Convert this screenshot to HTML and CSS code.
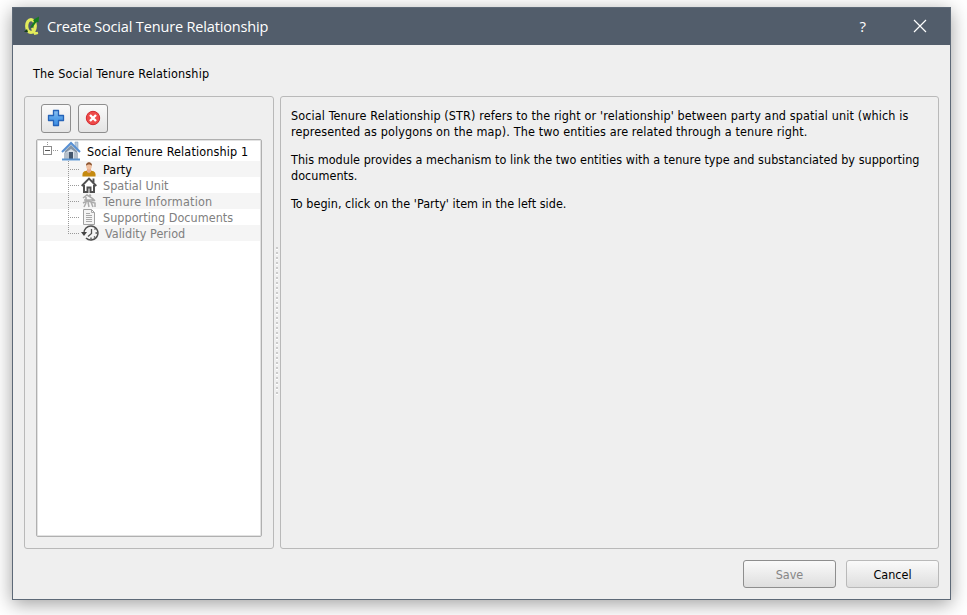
FILE: index.html
```html
<!DOCTYPE html>
<html lang="en">
<head>
<meta charset="utf-8">
<title>Create Social Tenure Relationship</title>
<link rel="stylesheet" href="styles.css">
</head>
<body>
<main class="window">
  <header class="titlebar">
    <svg class="logo" width="16" height="20" viewBox="0 0 16 20">
      <ellipse cx="7" cy="10" rx="4.300" ry="6.400" fill="none" stroke="#e3ec5b" stroke-width="3.200"/>
      <path d="M8 12l3 5.500 3-.7" fill="none" stroke="#e3ec5b" stroke-width="2.400"/>
      <path d="M0 16l3-3 1 3z" fill="#173f19"/>
      <path d="M6 11.500l4-6-1-1.500 6-3.500-.5 6-1.800-.8-4.200 5.500z" fill="#157a1f"/>
    </svg>
    <h1 class="title">Create Social Tenure Relationship</h1>
    <span class="help">?</span>
    <svg class="close" width="14" height="14" viewBox="0 0 14 14"><path d="M1 1l12 12M13 1L1 13" stroke="#fff" stroke-width="1.200"/></svg>
  </header>
  <p class="heading">The Social Tenure Relationship</p>
  <div class="panes">
    <section class="panel side">
      <div class="tools">
        <button class="tool" aria-label="Add">
          <svg width="18" height="18" viewBox="0 0 18 18"><defs><linearGradient id="plus" x2="0" y2="1"><stop stop-color="#8fc3f2"/><stop offset=".5" stop-color="#55a0e8"/><stop offset="1" stop-color="#3f8fe4"/></linearGradient></defs><path d="M6.500 1.500h5v5h5v5h-5v5h-5v-5h-5v-5h5z" fill="url(#plus)" stroke="#2563b8" stroke-width="1.300" stroke-linejoin="round"/></svg>
        </button>
        <button class="tool" aria-label="Remove">
          <svg width="18" height="18" viewBox="0 0 18 18"><circle cx="9" cy="9" r="6.700" fill="#ee4a49" stroke="#d22a30"/><path d="M6 6l6 6M12 6l-6 6" stroke="#fff" stroke-width="2.400"/></svg>
        </button>
      </div>
      <div class="tree">
        <div class="row root">
          <svg class="branch" width="23" height="20" viewBox="0 0 23 20"><path d="M9.500 1v5M15 9.500h5" stroke="#999" stroke-dasharray="1 1"/><rect x="5.500" y="5.500" width="8" height="8" fill="#fff" stroke="#8c8c8c"/><path d="M7 9.500h5" stroke="#555"/></svg>
          <svg class="icon-root" width="20" height="20" viewBox="0 0 20 20"><path d="M14 1h3v8h-3z" fill="#b9cadb" stroke="#8297b0" stroke-width=".5"/><path d="M3 9l7-6 7 6v10H3z" fill="#dbe2e9"/><path d="M3 12v7h5v-8zM13 11v8h4v-7z" fill="#b4bfcb"/><path d="M8 11h4v8H8z" fill="#44576e"/><path d="M10 4l-6 6v2l6-4 6 4v-2z" fill="#8796a6"/><path d="M1 11l9-9 9 9" fill="none" stroke="#578fd3" stroke-width="2"/><path d="M1 18.500h18" stroke="#5c94cf" stroke-width="2"/></svg>
          <span class="label">Social Tenure Relationship 1</span>
        </div>
        <div class="row alt party">
          <svg class="branch" width="16" height="16" viewBox="0 0 16 16"><path d="M2.500 0v16M4 8.500h9" stroke="#999" stroke-dasharray="1 1"/></svg>
          <svg class="icon" width="16" height="16" viewBox="0 0 16 16"><path d="M1.500 15.500c-.5-4 1-6 6.500-6s7 2 6.500 6z" fill="#c58a10"/><path d="M6 7h4v4l-2 1-2-1z" fill="#e5a989"/><ellipse cx="8" cy="5" rx="2.800" ry="3.600" fill="#f0c09f"/><path d="M5 5C4.500 0 11.500 0 11 5 10 3 6 3 5 5z" fill="#8c5632"/></svg>
          <span class="label">Party</span>
        </div>
        <div class="row off spatial">
          <svg class="branch" width="16" height="16" viewBox="0 0 16 16"><path d="M2.500 0v16M4 8.500h9" stroke="#999" stroke-dasharray="1 1"/></svg>
          <svg class="icon" width="16" height="16" viewBox="0 0 16 16"><path d="M.7 9L8 1.500 15.300 9M12.500 1.500v4" fill="none" stroke="#505050" stroke-width="1.900"/><path d="M3 8v7h3.500v-4.500h3V15H13V8" fill="none" stroke="#505050" stroke-width="2"/></svg>
          <span class="label">Spatial Unit</span>
        </div>
        <div class="row off alt tenure">
          <svg class="branch" width="16" height="16" viewBox="0 0 16 16"><path d="M2.500 0v16M4 8.500h9" stroke="#999" stroke-dasharray="1 1"/></svg>
          <svg class="icon" width="16" height="16" viewBox="0 0 16 16"><path d="M2 5l4-3 5 3 3 3M3 7h8M5 4v6M2 10l4-2 5 1M3 14l2-4M8 14l-1-5M12 14l-2-5 4 1v4" fill="none" stroke="#aaa" stroke-width="1.500"/><circle cx="9" cy="2.500" r="1.200" fill="#aaa"/><circle cx="12" cy="7" r="1.500" fill="#aaa"/></svg>
          <span class="label">Tenure Information</span>
        </div>
        <div class="row off docs">
          <svg class="branch" width="16" height="16" viewBox="0 0 16 16"><path d="M2.500 0v16M4 8.500h9" stroke="#999" stroke-dasharray="1 1"/></svg>
          <svg class="icon" width="16" height="16" viewBox="0 0 16 16"><path d="M2.500.5h8l3 3v12h-11z" fill="#f4f4f4" stroke="#a0a0a0"/><path d="M10.500.5v3h3M5 4.500h4M5 6.500h6M5 8.500h6M5 10.500h6M5 12.500h6" fill="none" stroke="#a8a8a8"/></svg>
          <span class="label">Supporting Documents</span>
        </div>
        <div class="row off alt validity">
          <svg class="branch" width="16" height="16" viewBox="0 0 16 16"><path d="M2.500 0v9M4 8.500h9" stroke="#999" stroke-dasharray="1 1"/></svg>
          <svg class="icon" width="18" height="16" viewBox="0 0 18 16"><path d="M3 8C3 4 6 1 10 1a7 7 0 1 1-5 12" fill="none" stroke="#505050" stroke-width="1.500"/><path d="M0 7h6L3 11z" fill="#444"/><path d="M10.500 4v4.500L7 11.500M14.500 8h1.500M10 12.500V14M13.500 4.500l1-1M13 11.500l1 1" fill="none" stroke="#505050" stroke-width="1.300"/></svg>
          <span class="label">Validity Period</span>
        </div>
      </div>
    </section>
    <div class="splitter"></div>
    <section class="panel info">
      <p class="wide">Social Tenure Relationship (STR) refers to the right or 'relationship' between party and spatial unit (which is<br>represented as polygons on the map). The two entities are related through a tenure right.</p>
      <p>This module provides a mechanism to link the two entities with a tenure type and substanciated by supporting<br>documents.</p>
      <p>To begin, click on the 'Party' item in the left side.</p>
    </section>
  </div>
  <footer class="actions">
    <button class="btn save" disabled>Save</button>
    <button class="btn">Cancel</button>
  </footer>
</main>
</body>
</html>
```
FILE: styles.css
```css
* { box-sizing: border-box; }
body {
  margin: 0;
  padding: 7px 16px 15px 12px;
  height: 615px;
  overflow: hidden;
  background: #fff;
  font: 12.5px/16px "DejaVu Sans Condensed", "DejaVu Sans", sans-serif;
  font-stretch: condensed;
  letter-spacing: .03px;
  color: #000;
}
p, h1 { margin: 0; }
.window {
  width: 939px;
  height: 593px;
  border: 1px solid #5d6977;
  background: #efefef;
  box-shadow: 0 4px 18px rgba(0, 0, 0, .38);
  display: flex;
  flex-direction: column;
}
.titlebar {
  height: 37px;
  flex: none;
  background: #525d6b;
  color: #fff;
  display: flex;
  align-items: center;
  padding: 0 23px 1px 11px;
}
.title {
  flex: 1;
  margin-left: 7px;
  padding-top: 2px;
  font: 400 14.5px/20px "Open Sans", sans-serif;
  letter-spacing: -.16px;
  white-space: nowrap;
}
.help { font: 15px/20px "Open Sans", sans-serif; margin-right: 47px; }
.heading { margin: 21px 0 0 20px; height: 30px; letter-spacing: .17px; }
.panes { display: flex; padding-left: 11px; height: 453px; }
.panel { border: 1px solid #b9b9b9; border-radius: 3px; }
.side {
  width: 250px;
  padding: 7px 11px 11px;
  display: flex;
  flex-direction: column;
}
.tools { display: flex; gap: 7px; padding-left: 5px; height: 35px; }
.tool {
  width: 30px;
  height: 29px;
  padding: 0 0 1px;
  border: 1px solid #8e8e8e;
  border-radius: 3px;
  background: linear-gradient(#fafafa, #e4e4e4);
  display: grid;
  place-items: center;
}
.tree {
  flex: 1;
  width: 226px;
  border: 1px solid #b0b0b0;
  border-radius: 2px;
  background: #fff;
  box-shadow: inset 0 0 0 1px #e2e2e2;
  padding: 1px;
}
.row { display: flex; align-items: center; height: 16px; padding-left: 28px; white-space: nowrap; }
.row svg { flex: none; }
.row .icon { margin: 0 6px 0 -1px; }
.label { padding-top: 2px; }
.alt { background: #f5f5f5; }
.off { color: #808080; }
.root { height: 20px; padding-left: 0; letter-spacing: .14px; }
.icon-root { margin: 0 6px 0 0; }
.tenure { letter-spacing: .2px; }
.splitter {
  width: 6px;
  height: 149px;
  margin-top: 150px;
  background: repeating-linear-gradient(transparent 0 1px, #cbcbcb 1px 3px, #fff 3px 4px, transparent 4px 5px) 2px 0 / 2px 100% no-repeat;
}
.info { width: 659px; padding: 11px 10px; white-space: nowrap; }
.info p + p { margin-top: 12px; }
.wide { letter-spacing: .115px; }
.actions { display: flex; justify-content: flex-end; gap: 10px; padding: 11px 11px 0 0; }
.btn {
  width: 93px;
  height: 28px;
  padding: 1px 0 0;
  border: 1px solid #b9b9b9;
  border-radius: 3px;
  background: linear-gradient(#fafafa, #dedede);
  font: inherit;
  letter-spacing: 0;
  color: #000;
}
.save { border-color: #8e8e8e; color: #868686; }
```
